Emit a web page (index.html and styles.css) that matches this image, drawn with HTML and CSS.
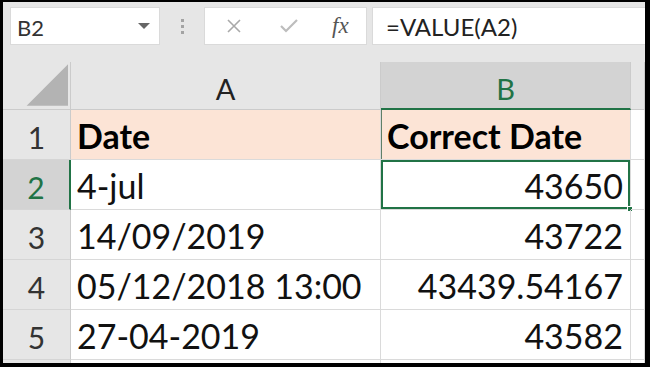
FILE: index.html
```html
<!DOCTYPE html>
<html lang="en">
<head>
    <meta charset="UTF-8">
    <title>VALUE dates</title>
    <link rel="stylesheet" href="styles.css">
</head>
<body>
    <div class="frame">
        <!-- Formula bar -->
        <div class="toolbar">
            <div class="name-box">
                <span>B2</span>
                <span class="caret"></span>
            </div>
            <div class="grip"><i></i><i></i><i></i></div>
            <div class="fx-group">
                <svg class="icon" width="14" height="14" viewBox="0 0 14 14">
                    <path d="M1 1 L13 13 M13 1 L1 13" stroke="#a9a9a9" stroke-width="1.6" fill="none"/>
                </svg>
                <svg class="icon" width="18" height="14" viewBox="0 0 18 14">
                    <path d="M1 7 L6 12 L17 1" stroke="#bdbdbd" stroke-width="2.2" fill="none"/>
                </svg>
                <span class="fx">fx</span>
            </div>
            <div class="formula">=VALUE(A2)</div>
        </div>

        <!-- Sheet -->
        <div class="sheet">
            <div class="hd corner">
                <svg width="68" height="48" viewBox="0 0 68 48">
                    <polygon points="24,45 66,45 66,3" fill="#b3b3b3"/>
                </svg>
            </div>
            <div class="hd col">A</div>
            <div class="hd col active">B</div>
            <div class="hd col"></div>

            <div class="hd row">1</div>
            <div class="cell head">Date</div>
            <div class="cell head b1">Correct Date</div>
            <div class="cell"></div>

            <div class="hd row active">2</div>
            <div class="cell">4-jul</div>
            <div class="cell num selected">43650<span class="handle"></span></div>
            <div class="cell"></div>

            <div class="hd row">3</div>
            <div class="cell">14/09/2019</div>
            <div class="cell num">43722</div>
            <div class="cell"></div>

            <div class="hd row">4</div>
            <div class="cell">05/12/2018 13:00</div>
            <div class="cell num">43439.54167</div>
            <div class="cell"></div>

            <div class="hd row">5</div>
            <div class="cell">27-04-2019</div>
            <div class="cell num">43582</div>
            <div class="cell"></div>

            <div class="hd row"></div>
            <div class="cell"></div>
            <div class="cell"></div>
            <div class="cell"></div>
        </div>
    </div>
</body>
</html>
```

FILE: styles.css
```css
* {
    box-sizing: border-box;
}

body {
    margin: 0;
    font-family: 'Lato', 'Liberation Sans', sans-serif;
    background-color: #000;
}

.frame {
    width: 650px;
    height: 367px;
    border-style: solid;
    border-color: #000;
    border-width: 2px 5px 4px 3px;
    background-color: #e6e6e6;
    display: flex;
    flex-direction: column;
    overflow: hidden;
}

/* Formula bar */
.toolbar {
    height: 60px;
    flex: none;
    display: flex;
    align-items: flex-start;
    padding: 5px 0 0 7px;
    gap: 5px;
}

.name-box {
    width: 150px;
    height: 38px;
    background-color: #fff;
    border: 1px solid #dadada;
    display: flex;
    align-items: center;
    justify-content: space-between;
    padding: 2px 9px 0 6px;
    font-size: 22px;
    color: #333;
}

.caret {
    width: 0;
    height: 0;
    border-left: 6px solid transparent;
    border-right: 6px solid transparent;
    border-top: 6px solid #666;
    margin-bottom: 2px;
}

.grip {
    width: 34px;
    height: 38px;
    display: flex;
    flex-direction: column;
    align-items: center;
    justify-content: center;
    gap: 3px;
}

.grip i {
    width: 3px;
    height: 3px;
    background-color: #a3a3a3;
}

.fx-group {
    width: 163px;
    height: 38px;
    background-color: #fff;
    border: 1px solid #dadada;
    display: flex;
    align-items: center;
    padding: 0 0 0 22px;
}

.fx-group .icon:nth-child(2) {
    margin-left: 39px;
}

.fx {
    margin-left: 34px;
    font-family: 'Liberation Serif', serif;
    font-style: italic;
    font-size: 23px;
    color: #555;
}

.formula {
    flex: 1;
    height: 38px;
    background-color: #fff;
    border: 1px solid #dadada;
    border-right: none;
    display: flex;
    align-items: center;
    padding: 1px 0 0 13px;
    font-size: 24px;
    color: #222;
}

/* Sheet grid */
.sheet {
    flex: 1;
    display: grid;
    grid-template-columns: 68px 310px 250px 1fr;
    grid-template-rows: 48px repeat(5, 50px) 1fr;
    background-color: #fff;
    overflow: hidden;
}

.hd {
    background-color: #e6e6e6;
    border-right: 1px solid #cbcbcb;
    border-bottom: 1px solid #cbcbcb;
    color: #333;
    display: flex;
    justify-content: center;
    align-items: flex-end;
}

.hd.col {
    font-size: 29px;
    padding-bottom: 3px;
    color: #222;
}

.hd.row {
    font-size: 30px;
    padding-bottom: 4px;
    border-bottom-color: #d5d5d5;
}

.hd.active {
    background-color: #d3d3d3;
    color: #217346;
}

.hd.col.active {
    border-bottom: 2px solid #217346;
    padding-bottom: 2px;
}

.hd.row.active {
    border-right: 2px solid #217346;
}

.corner {
    padding: 0;
    overflow: hidden;
}

.cell {
    position: relative;
    border-right: 1px solid #dadada;
    border-bottom: 1px solid #dadada;
    font-size: 34px;
    color: #111;
    display: flex;
    align-items: flex-end;
    padding: 0 7px 3px 6px;
    white-space: nowrap;
}

.cell.head {
    background-color: #fce4d6;
    font-weight: bold;
    color: #000;
}

.cell.b1 {
    box-shadow: inset 1px 0 0 #5f7f68;
}

.num {
    justify-content: flex-end;
}

.selected {
    box-shadow: inset 0 0 0 2px #217346;
}

.handle {
    position: absolute;
    right: -3px;
    bottom: -3px;
    width: 6px;
    height: 6px;
    background-color: #217346;
    border: 1px solid #fff;
}
```
